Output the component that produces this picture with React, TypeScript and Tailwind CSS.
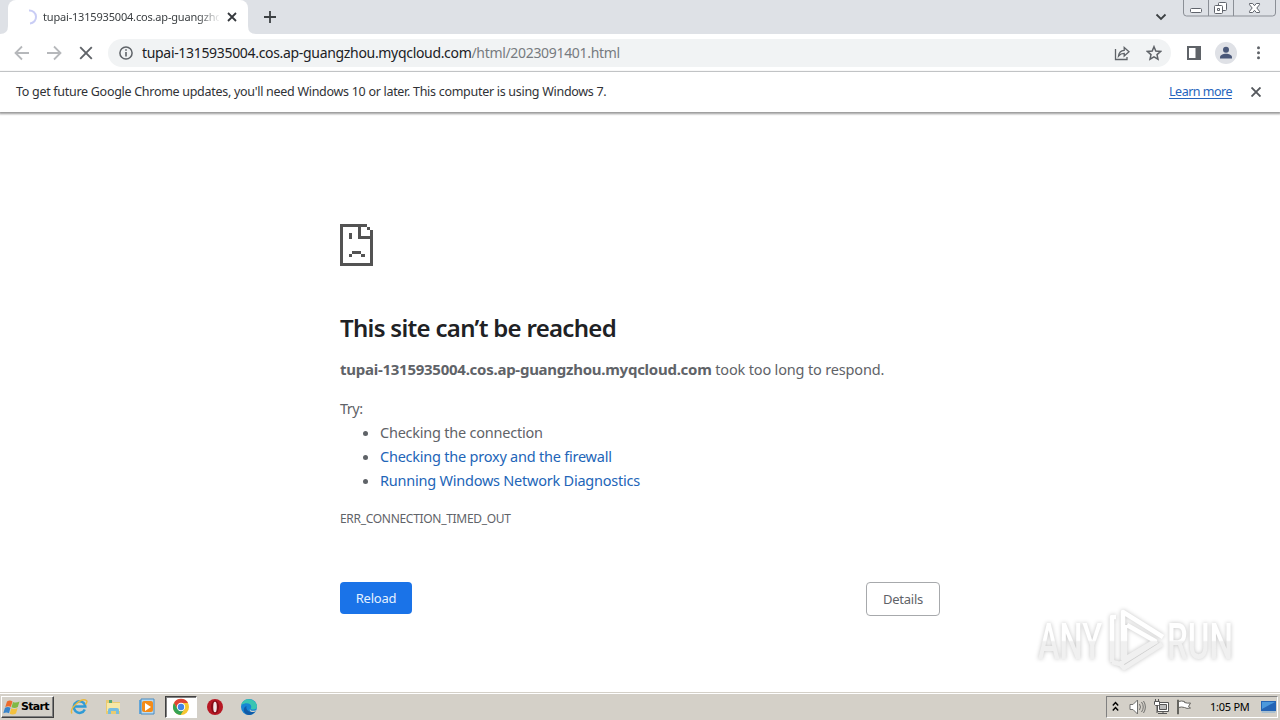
import type { ReactNode } from 'react'

function Tab() {
  return (
    <div className="relative ml-2 flex h-[34px] w-[240px] items-center rounded-t-lg bg-white pl-[14px]">
      <svg className="absolute bottom-0 -left-2 size-2" viewBox="0 0 8 8">
        <path d="M8 0v8H0q8 0 8-8" fill="#fff" />
      </svg>
      <svg className="size-4 shrink-0" viewBox="0 0 16 16" fill="none">
        <path d="M7 1.5a6.5 6.5 0 0 1 1 13" stroke="#c9cdf5" strokeWidth="2" />
      </svg>
      <span className="ml-[5px] w-[176px] overflow-hidden text-[11px] leading-4 whitespace-nowrap text-[#3c4043] tracking-[-0.18px] [mask-image:linear-gradient(to_right,#000_155px,transparent_178px)]">
        tupai-1315935004.cos.ap-guangzhou.myqcloud.com
      </span>
      <svg className="ml-[8px] size-[10px] shrink-0" viewBox="0 0 10 10">
        <path d="m1 1 8 8M9 1 1 9" stroke="#35383d" strokeWidth="1.8" />
      </svg>
    </div>
  )
}

function WindowControls() {
  return (
    <svg className="mr-[3px] h-[18px] w-[95px]" viewBox="0 0 95 18" fill="none">
      <path
        d="M1.5-1v14q0 3 3 3h86q3 0 3-3V-1M26.5 0v16M51.5 0v16"
        stroke="#8b8f96"
      />
      <rect x="8.5" y="8.5" width="11" height="4" rx="1" fill="#fff" stroke="#60646c" />
      <rect x="36.5" y="2.5" width="8" height="8" rx="1" fill="#fff" stroke="#60646c" />
      <rect x="32.5" y="5.5" width="8" height="8" rx="1" fill="#fff" stroke="#60646c" />
      <path d="M35.5 8.500h2v2h-2z" stroke="#60646c" />
      <path
        d="M67.500 3.500h3.200l1.800 2.200 1.800-2.200h3.200v1.200L74.800 8l2.700 3.300v1.200h-3.200l-1.800-2.200-1.800 2.200h-3.200v-1.200L70.200 8l-2.700-3.300z"
        fill="#fff"
        stroke="#60646c"
      />
    </svg>
  )
}

function TabStrip() {
  return (
    <div className="flex h-[34px] bg-[#dee1e6]">
      <Tab />
      <div className="relative flex flex-1 items-center">
        <svg className="absolute bottom-0 left-0 size-2" viewBox="0 0 8 8">
          <path d="M0 0v8h8q-8 0-8-8" fill="#fff" />
        </svg>
        <svg className="ml-[16px] size-3" viewBox="0 0 12 12">
          <path d="M6 0v12M0 6h12" stroke="#3c4043" strokeWidth="1.8" />
        </svg>
      </div>
      <svg className="mt-[13px] mr-[15px] h-[8px] w-[12px]" viewBox="0 0 12 8" fill="none">
        <path d="m1.5 1.5 4.500 4.500 4.500-4.500" stroke="#3c4043" strokeWidth="1.8" />
      </svg>
      <WindowControls />
    </div>
  )
}

function Toolbar() {
  return (
    <div className="flex h-[38px] items-center border-b border-[#d5d7da] bg-white">
      <svg className="ml-[14px] h-4 w-4" viewBox="0 0 16 16" fill="none" stroke="#b6b8bb" strokeWidth="1.8">
        <path d="M15 8H2M8 1.500 1.500 8 8 14.500" />
      </svg>
      <svg className="ml-4 h-4 w-4" viewBox="0 0 16 16" fill="none" stroke="#b6b8bb" strokeWidth="1.8">
        <path d="M1 8h13M8 1.500 14.500 8 8 14.500" />
      </svg>
      <svg className="ml-4 h-4 w-4" viewBox="0 0 16 16" fill="none" stroke="#5f6368" strokeWidth="1.9">
        <path d="m2.200 2.200 11.600 11.600M13.800 2.200 2.200 13.800" />
      </svg>
      <div className="ml-[14px] flex h-7 w-[1063px] items-center rounded-full bg-[#f1f3f4] pl-[11px]">
        <svg className="size-[14px]" viewBox="0 0 14 14" fill="none" stroke="#5f6368" strokeWidth="1.5">
          <circle cx="7" cy="7" r="6.1" />
          <path d="M7 6v4.500M7 3.300v1.500" strokeWidth="1.6" />
        </svg>
        <span className="ml-[9px] text-[14px] leading-5 tracking-[-0.32px] whitespace-nowrap text-[#202124]">
          tupai-1315935004.cos.ap-guangzhou.myqcloud.com
          <span className="text-[#777b80]">/html/2023091401.html</span>
        </span>
        <svg className="ml-auto h-4 w-4" viewBox="0 0 16 16" fill="none" stroke="#5f6368" strokeWidth="1.3">
          <path d="M1.500 4v10.500h11.500V12" />
          <path d="M4.500 11c.4-3.700 2.300-5.500 5.700-5.700V2.500L15 6.800l-4.800 4.300V8.300C7.800 8.300 6 9.100 4.500 11z" />
        </svg>
        <svg className="mr-[9px] ml-[16px] h-4 w-4" viewBox="0 0 16 16" fill="none" stroke="#5f6368" strokeWidth="1.5">
          <path d="m8 1.700 1.800 4.400 4.700.4L11 9.600l1 4.600-4-2.400-4 2.400 1-4.600-3.500-3.100 4.700-.4z" />
        </svg>
      </div>
      <svg className="ml-4 h-[14px] w-[14px]" viewBox="0 0 14 14">
        <path d="M0 0h14v14H0zM2 2v10h6.500V2z" fill="#5f6368" fillRule="evenodd" />
      </svg>
      <svg className="ml-[14px] h-[22px] w-[22px]" viewBox="0 0 22 22">
        <circle cx="11" cy="11" r="11" fill="#dfe1e6" />
        <circle cx="11" cy="7.7" r="3" fill="#4a5879" />
        <path d="M5 16.500v-1.300c0-2 3-3.400 6-3.400s6 1.400 6 3.400v1.300z" fill="#4a5879" />
      </svg>
      <svg className="ml-[17px] h-4 w-4" viewBox="0 0 16 16" fill="#5f6368">
        <circle cx="4.500" cy="2.800" r="1.500" />
        <circle cx="4.500" cy="7.800" r="1.500" />
        <circle cx="4.500" cy="12.800" r="1.500" />
      </svg>
    </div>
  )
}

function UpdateBar() {
  return (
    <div className="relative z-10 flex h-[40px] shrink-0 items-center bg-white pr-[19px] pl-4 text-[12.5px] tracking-[-0.29px] text-[#303236] shadow-[0_1px_2px_1px_#9a9a9a]">
      <span className="whitespace-nowrap">
        To get future Google Chrome updates, you'll need Windows 10 or later. This computer is using Windows 7.
      </span>
      <a className="ml-auto tracking-[-0.5px] text-[#2564bd] underline underline-offset-2">Learn more</a>
      <svg className="ml-[19px] h-[10px] w-[10px]" viewBox="0 0 10 10">
        <path d="m.5.5 9 9M9.500.5l-9 9" stroke="#55585d" strokeWidth="1.9" />
      </svg>
    </div>
  )
}

function SadPage() {
  return (
    <svg className="h-[42px] w-[33px]" viewBox="0 0 33 42" fill="#535353" shapeRendering="crispEdges">
      <path d="M0 0h27v3h-6v9h9V6h3v36H0zM3 3v36h27V15H18V3z" fillRule="evenodd" />
      <path d="M27 3h3v3h-3zM9 9h3v6H9zM12 27h9v3h-9zM9 30h3v3H9zM21 30h4v3h-4z" />
    </svg>
  )
}

function ErrorPage() {
  return (
    <main className="ml-[340px] w-[600px] flex-1 pt-[112px] text-[14.5px] tracking-[-0.23px] text-[#5f6368]">
      <SadPage />
      <h1 className="mt-[46px] text-[24px] leading-[32px] font-semibold tracking-[-0.7px] whitespace-nowrap text-[#202124]">
        This site can’t be reached
      </h1>
      <p className="mt-[13px] leading-6 tracking-[-0.16px] whitespace-nowrap">
        <strong className="text-[15px] tracking-[-0.26px]">tupai-1315935004.cos.ap-guangzhou.myqcloud.com</strong>{' '}
        took too long to respond.
      </p>
      <p className="mt-[15px] leading-6 tracking-[-0.5px]">Try:</p>
      <ul className="list-disc pl-10 leading-6">
        <li>Checking the connection</li>
        <li>
          <a className="text-[#2265b8]">Checking the proxy and the firewall</a>
        </li>
        <li>
          <a className="text-[#2265b8]">Running Windows Network Diagnostics</a>
        </li>
      </ul>
      <p className="mt-[18px] text-[12px] leading-[18px] tracking-[-0.3px]">ERR_CONNECTION_TIMED_OUT</p>
      <div className="mt-[54px] flex items-start justify-between text-[13px]">
        <button className="h-8 w-[72px] rounded bg-[#1a73e8] pt-0.5 text-[#e4f1ff]">Reload</button>
        <button className="h-[34px] w-[74px] rounded border border-[#a7a9ac] pt-0.5">Details</button>
      </div>
    </main>
  )
}

function Watermark() {
  return (
    <svg
      className="absolute top-[602px] left-[1030px] h-[78px] w-[220px] drop-shadow-[0_0_2px_#c4c4c4]"
      viewBox="0 0 220 78"
    >
      <defs>
        <linearGradient id="mark" x1="0" y1="0" x2="0" y2="78" gradientUnits="userSpaceOnUse">
          <stop offset=".49" stopColor="#fff" />
          <stop offset=".51" stopColor="#f0f0f0" />
        </linearGradient>
      </defs>
      <g fill="url(#mark)" fontFamily="Roboto, sans-serif" fontSize="50" fontWeight="500">
        <text x="8" y="57" textLength="64" lengthAdjust="spacingAndGlyphs">ANY</text>
        <text x="137" y="57" textLength="66" lengthAdjust="spacingAndGlyphs">RUN</text>
      </g>
      <g fill="none" stroke="url(#mark)" strokeWidth="4.500" strokeLinejoin="round">
        <path d="M86 15h-4v45" />
        <path d="M93 58V10l40 25" />
        <path d="m97 23 28 16-30 18V23" />
        <path d="m82 60 8 2 37-23" />
        <path d="m90 61 4 5 38-24" />
      </g>
    </svg>
  )
}

function TaskIcon({ children }: { children: ReactNode }) {
  return (
    <svg className="size-[18px]" viewBox="0 0 18 18">
      {children}
    </svg>
  )
}

function Taskbar() {
  return (
    <footer className="flex h-[28px] items-center border-t border-[#d4d0c8] bg-[#d4d0c8] shadow-[inset_0_1px_0_#fff]">
      <div className="mt-px ml-px flex h-[22px] w-[53px] items-center border border-t-white border-r-[#404040] border-b-[#404040] border-l-white pl-px shadow-[inset_-1px_-1px_0_#808080]">
        <svg className="h-[17px] w-[17px]" viewBox="0 0 17 16">
          <path d="M4 2q3-2 5.500 0L7.800 7.500q-2-1.500-5.500 0z" fill="#ed6b2c" />
          <path d="M10 2.500q3 1.300 6.500-.5l-1.700 5.500q-3 1.800-6.300.3z" fill="#80b944" />
          <path d="M2 8.200q3-1.500 5.500 0L6 13.700q-2.500-1.500-5.700 0z" fill="#3984ca" />
          <path d="M8.300 8.700q3 1.500 6.300-.3L13 13.900q-3 1.800-6.300.3z" fill="#f4c13d" />
        </svg>
        <span className="ml-px font-['DejaVu_Sans',sans-serif] text-[11px] font-bold tracking-[-0.7px] text-black">Start</span>
      </div>
      <div className="mt-px ml-[16px] flex items-center gap-[16px]">
        <TaskIcon>
          <path d="M14.800 11.500a5.800 5.800 0 1 1 .5-3H5" fill="none" stroke="#309bd5" strokeWidth="2.500" />
          <path d="M2 15.500C-1 11 11-1 16.500 2.500c1 1-.2 3-1 4" fill="none" stroke="#e9b83d" strokeWidth="1.400" />
        </TaskIcon>
        <TaskIcon>
          <path d="M2 2h6l1 2h7v12H2z" fill="#eacb70" />
          <path d="M3 5h13v8H3z" fill="#f7e8a6" />
          <path d="M5 2h3v3H5z" fill="#55a878" />
          <path d="M4 16v-4q0-2 2-2h7q2 0 2 2v4h-3v-3H7v3z" fill="#76bde0" />
        </TaskIcon>
        <TaskIcon>
          <path d="M1 2h13v14H1z" fill="#65a6d7" />
          <path d="M3 1h13v15H3z" fill="#b9daf1" stroke="#488bc1" />
          <rect x="4" y="3" width="11" height="11" rx="2" fill="#f48b18" />
          <path d="m7 5 6 4-6 4z" fill="#fff" />
        </TaskIcon>
        <div className="-mx-[7px] flex h-[22px] w-[32px] items-center justify-center border border-t-[#404040] border-r-white border-b-white border-l-[#404040] bg-white shadow-[inset_1px_1px_0_#808080]">
          <TaskIcon>
            <circle cx="9" cy="9" r="8" fill="#f6c631" />
            <path d="M9 9 5.500 11 2 5a8 8 0 0 1 14-.1H9z" fill="#df4435" />
            <path d="M2 5a8 8 0 0 0 6.500 12l3.800-6L9 9 5.500 11z" fill="#35a354" />
            <circle cx="9" cy="9" r="4.200" fill="#fff" />
            <circle cx="9" cy="9" r="3.200" fill="#4285e8" />
          </TaskIcon>
        </div>
        <TaskIcon>
          <circle cx="9" cy="9" r="8" fill="#b71824" />
          <ellipse cx="9" cy="9" rx="4" ry="6.500" fill="#860b16" />
          <ellipse cx="9" cy="9" rx="1.800" ry="5.300" fill="#f2e5e6" />
        </TaskIcon>
        <TaskIcon>
          <circle cx="9" cy="9" r="8" fill="#1686d4" />
          <path d="M1.200 7C3-.5 15-1 17 8c.2 3-2 4-5 3.500-1.400-.3-1.500-1-.8-2C12 5 6 3.800 1.200 7z" fill="#39c5b2" />
          <path d="M6.500 8c-1 5 4 7.500 9 5-3 5-9 4.800-11 1.500C3 12 4 9 6.500 8z" fill="#115aa6" />
          <path d="M10 11c0 2 4 2.500 6.500 1l-1.300 1.500C12 15 9 13.500 10 11z" fill="#d4d0c8" />
        </TaskIcon>
      </div>
      <div className="mt-px mr-[2px] ml-auto flex h-[22px] w-[172px] items-center border border-t-[#808080] border-r-white border-b-white border-l-[#808080] pl-[5px]">
        <svg className="h-3 w-[7px]" viewBox="0 0 7 12" fill="none" stroke="#000" strokeWidth="1.400">
          <path d="m.8 4.500 2.700-3 2.700 3M.8 9.500l2.700-3 2.700 3" />
        </svg>
        <svg className="ml-[10px] h-4 w-[17px]" viewBox="0 0 17 16" fill="none" stroke="#71716f">
          <path d="M1 5.500h3L8.500 1v14L4 10.500H1z" fill="#fff" />
          <path d="M10.500 5q2 3 0 6M12.500 3q3.500 5 0 10M14.500 2q3.800 6 0 12" />
        </svg>
        <svg className="ml-[7px] h-4 w-4" viewBox="0 0 16 16" fill="none" stroke="#555">
          <path d="M4.500 3.500h11v9h-11z" fill="#fff" />
          <path d="M6.500 5.500h7v5h-7z" fill="#bbb" />
          <path d="M10 12.500v2M5 14.500h9M1.500 2.500h5v3l-1 1h-3l-1-1zM2.500 0v2M5.500 0v2M4 7v7" fill="#fff" />
        </svg>
        <svg className="ml-[7px] h-4 w-4" viewBox="0 0 16 16" fill="#fff" stroke="#65645f">
          <path d="M1.500 1v14h1V1zM2.500 2.500q3-1 6 0v1q3 1 6 .5l-2 3.500 2 1.500q-4 1-6-.5-3-1-6 0z" />
        </svg>
        <time className="ml-[18px] text-[11px] tracking-[-0.25px] whitespace-nowrap text-black">1:05 PM</time>
        <svg className="ml-auto h-4 w-[17px]" viewBox="0 0 17 16">
          <path d="M1 2h15v10H1z" fill="#2464b5" />
          <path d="M2 3h13L2 10z" fill="#4b98dc" />
          <path d="M1 12h15l-1 2H2z" fill="#a9bfce" />
        </svg>
      </div>
    </footer>
  )
}

export default function App() {
  return (
    <div className="relative flex h-[720px] w-[1280px] flex-col overflow-hidden bg-white font-['Noto_Sans','Open_Sans',sans-serif]">
      <TabStrip />
      <Toolbar />
      <UpdateBar />
      <ErrorPage />
      <Taskbar />
      <Watermark />
    </div>
  )
}
